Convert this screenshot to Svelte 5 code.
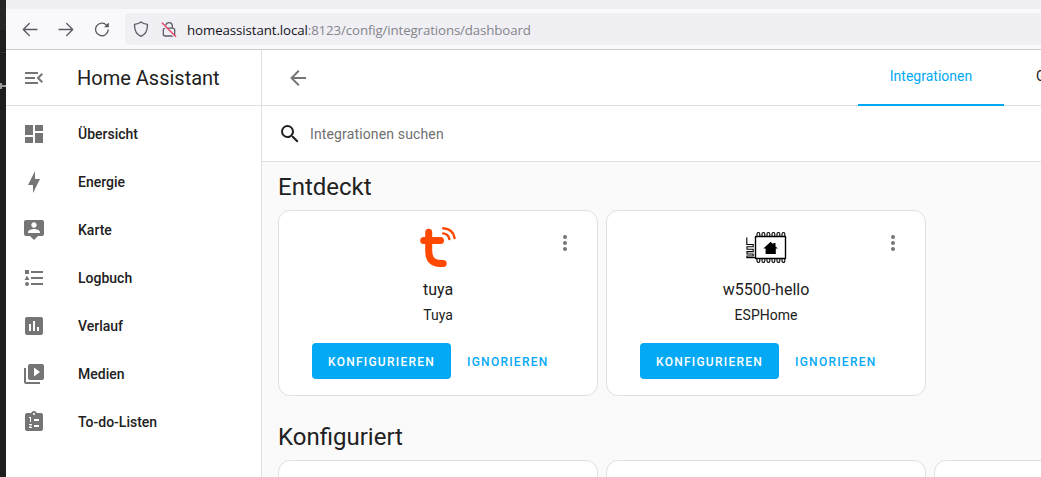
<script>
  const nav = [
    { label: 'Übersicht', path: 'M13,3V9H21V3M13,21H21V11H13M3,21H11V15H3M3,13H11V3H3V13Z' },
    { label: 'Energie', path: 'M11 15H6L13 1V9H18L11 23V15Z' },
    { label: 'Karte', path: 'M20 2H4C2.89 2 2 2.89 2 4V16C2 17.11 2.9 18 4 18H8L12 22L16 18H20C21.11 18 22 17.11 22 16V4C22 2.9 21.11 2 20 2M12 4.3C13.5 4.3 14.7 5.5 14.7 7S13.5 9.7 12 9.7 9.3 8.5 9.3 7 10.5 4.3 12 4.3M18 15H6V14.1C6 12.1 10 11 12 11S18 12.1 18 14.1V15Z' },
    { label: 'Logbuch', path: 'M5,9.5L7.5,14H2.5L5,9.5M3,4H7V8H3V4M5,20A2,2 0 0,0 7,18A2,2 0 0,0 5,16A2,2 0 0,0 3,18A2,2 0 0,0 5,20M9,5V7H21V5H9M9,19H21V17H9V19M9,13H21V11H9V13Z' },
    { label: 'Verlauf', path: 'M19,3H5C3.9,3 3,3.9 3,5V19C3,20.1 3.9,21 5,21H19C20.1,21 21,20.1 21,19V5C21,3.9 20.1,3 19,3M9,17H7V10H9V17M13,17H11V7H13V17M17,17H15V13H17V17Z' },
    { label: 'Medien', path: 'M4,6H2V20A2,2 0 0,0 4,22H18V20H4V6M20,2H8A2,2 0 0,0 6,4V16A2,2 0 0,0 8,18H20A2,2 0 0,0 22,16V4A2,2 0 0,0 20,2M12,14.5V5.5L18,10L12,14.5Z' },
    { label: 'To-do-Listen', path: 'M19 3H14.82C14.4 1.84 13.3 1 12 1S9.6 1.84 9.18 3H5C3.9 3 3 3.9 3 5V19C3 20.1 3.9 21 5 21H19C20.1 21 21 20.1 21 19V5C21 3.9 20.1 3 19 3M12 3C12.55 3 13 3.45 13 4S12.55 5 12 5 11 4.55 11 4 11.45 3 12 3M7 7H9V12H8V8H7V7M10 17V18H7V17.08L9 15H7V14H9.25C9.66 14 10 14.34 10 14.75C10 14.95 9.92 15.14 9.79 15.27L8.12 17H10M12 9H17V11H12V9M12 15H17V17H12V15Z' },
  ];
  const found = [
    { name: 'tuya', domain: 'Tuya', logo: 'tuya' },
    { name: 'w5500-hello', domain: 'ESPHome', logo: 'esp' },
  ];
  const pins = [0, 1, 2, 3, 4, 5];
</script>

<div class="screen">
  <div class="desktop"><i></i></div>
  <div class="browser">
    <div class="tabstrip"></div>
    <div class="toolbar">
      <svg class="nav-ic" viewBox="0 0 16 16"><path d="M15 8.5H1.6M7.3 2.5L1.3 8.5L7.3 14.5" /></svg>
      <svg class="nav-ic" viewBox="0 0 16 16"><path d="M1 8.5H14.4M8.7 2.5L14.7 8.5L8.7 14.5" /></svg>
      <svg class="nav-ic" viewBox="0 0 16 16"><path d="M12.6 4.2A6.3 6.3 0 1 0 14.2 8.9" /><path class="solid" d="M14.9 1.6V6.2H9.9Z" /></svg>
      <div class="url">
        <svg viewBox="0 0 16 16"><path d="M8 .9C6.2 2.4 3.8 3 1.6 3.3C1.3 8.6 3 13.3 8 15.3C13 13.3 14.7 8.6 14.4 3.3C12.2 3 9.8 2.4 8 .9Z" /></svg>
        <svg class="lock" viewBox="0 0 16 16"><path d="M4.9 4A3.3 3.3 0 0 1 11.3 4.3V7M4.3 7.2H11.7Q13.7 7.2 13.7 9.2V13Q13.7 15 11.7 15H4.3Q2.3 15 2.3 13V9.2Q2.3 7.2 4.3 7.2Z" /><path class="halo" d="M1 3.4L14 16.4" /><path class="strike" d="M1.2 2L14.7 15.5" /></svg>
        <span class="address"><b>homeassistant.local</b>:8123/config/integrations/dashboard</span>
      </div>
    </div>
    <div class="app">
      <aside>
        <div class="brand">
          <svg class="mdi" viewBox="0 0 24 24"><path d="M21,15.61L19.59,17L14.58,12L19.59,7L21,8.39L17.44,12L21,15.61M3,6H16V8H3V6M3,13V11H13V13H3M3,18V16H16V18H3Z" /></svg>
          <span>Home Assistant</span>
        </div>
        <nav>
          {#each nav as item}
            <a href="#top"><svg class="mdi" viewBox="0 0 24 24"><path fill-rule="evenodd" d={item.path} /></svg><span>{item.label}</span></a>
          {/each}
        </nav>
      </aside>
      <main>
        <header>
          <svg class="mdi" viewBox="0 0 24 24"><path d="M20,11V13H7.99L13.5,18.5L12.08,19.92L4.16,12L12.08,4.08L13.5,5.5L7.99,11H20Z" /></svg>
          <div class="tabs">
            <div class="tab active">Integrationen</div>
            <div class="tab">Geräte</div>
          </div>
        </header>
        <div class="search">
          <svg class="mdi" viewBox="0 0 24 24"><path d="M9.5,3A6.5,6.5 0 0,1 16,9.5C16,11.11 15.41,12.59 14.44,13.73L14.71,14H15.5L20.5,19L19,20.5L14,15.5V14.71L13.73,14.44C12.59,15.41 11.11,16 9.5,16A6.5,6.5 0 0,1 3,9.5A6.5,6.5 0 0,1 9.5,3M9.5,5C7,5 5,7 5,9.5C5,12 7,14 9.5,14C12,14 14,12 14,9.5C14,7 12,5 9.5,5Z" /></svg>
          <span>Integrationen suchen</span>
        </div>
        <section>
          <h1>Entdeckt</h1>
          <div class="grid">
            {#each found as f}
              <article>
                <svg class="mdi dots" viewBox="0 0 24 24"><circle cx="12" cy="6" r="2" /><circle cx="12" cy="12" r="2" /><circle cx="12" cy="18" r="2" /></svg>
                {#if f.logo === 'tuya'}
                  <svg class="logo" viewBox="0 0 40 40" fill="none" stroke="#ff4800" stroke-linecap="round" stroke-linejoin="round">
                    <path stroke-width="7" d="M10.7 5.2V23.5Q10.7 36.3 22 36.4H25.2M5.7 13.6H22.5" />
                    <path stroke-width="2.4" d="M25.2 6.4Q30.4 7.2 31.3 12M25.2 1.3Q35 2 36.6 11" />
                  </svg>
                {:else}
                  <svg class="logo esp" viewBox="0 0 40 40" fill="none" stroke="#000">
                    <rect x="9.5" y="5.5" width="30" height="22" stroke-width="1.4" rx=".5" />
                    {#each pins as p}
                      <path stroke-width="1.1" d="M{11 + p * 5} 5.2V3Q{11 + p * 5} 1.5 {12.4 + p * 5} 1.5T{13.8 + p * 5} 3V5.2M{11 + p * 5} 28V30Q{11 + p * 5} 31.4 {12.4 + p * 5} 31.4T{13.8 + p * 5} 30V28" />
                    {/each}
                    <path stroke-width="1.1" d="M.8 6.5V13.5H7.2V15.8H1V18.2H7.2V20.6H1V23H7.2V25H.9V26.6H9" />
                    <path fill="#000" stroke="none" d="M24.6 10.8L31.8 17.4H29.8V23H19.6V17.4H17.4ZM27.3 12H29.5V16H27.3Z" />
                  </svg>
                {/if}
                <div class="name">{f.name}</div>
                <div class="domain">{f.domain}</div>
                <div class="actions"><button class="fill">KONFIGURIEREN</button><button>IGNORIEREN</button></div>
              </article>
            {/each}
          </div>
          <h1 class="second">Konfiguriert</h1>
          <div class="grid"><article></article><article></article><article></article></div>
        </section>
      </main>
    </div>
  </div>
</div>

<style>
  :global(body) { margin: 0; overflow: hidden; }
  .screen { display: flex; width: 1041px; height: 477px; overflow: hidden; font-family: Roboto, sans-serif; color: #212121; background: #fff; }
  .desktop { width: 6px; flex: none; background: linear-gradient(#262626 30px, #1e1e1e 30px 52px, #2c2c2c 52px 53px, #1e1e1e 53px); box-sizing: border-box; padding-top: 83px; }
  .desktop i { display: block; height: 6px; background: linear-gradient(#999, #999) 0 0 / 2px 6px no-repeat, linear-gradient(#999, #999) 0 2px / 6px 2px no-repeat; }
  .browser { flex: 1; min-width: 0; display: flex; flex-direction: column; }
  .tabstrip { height: 9px; flex: none; background: #f0f0f4; }
  .toolbar { height: 40px; flex: none; display: flex; align-items: center; background: #f9f9fb; border-bottom: 1px solid #ccc; padding-left: 16px; gap: 20px; }
  .toolbar svg { width: 16px; height: 16px; flex: none; fill: none; stroke: #5b5b66; stroke-width: 1.3; stroke-linecap: round; stroke-linejoin: round; }
  .toolbar .solid { fill: #5b5b66; stroke: none; }
  .toolbar .halo { stroke: #f0f0f4; stroke-width: 1.4; }
  .toolbar .strike { stroke: #e8416a; stroke-width: 1.3; }
  .url { flex: 1; height: 32px; margin-left: -5px; padding-left: 8px; background: #f0f0f4; border-radius: 4px 0 0 4px; display: flex; align-items: center; gap: 12px; white-space: nowrap; overflow: hidden; }
  .address { font: 13.3px/20px "Open Sans", sans-serif; letter-spacing: -0.13px; color: #85858c; margin-left: -2px; padding-top: 2px; }
  .address b { font-weight: 400; color: #15141a; letter-spacing: -0.1px; }
  .app { flex: 1; min-height: 0; display: flex; }
  aside { width: 255px; flex: none; border-right: 1px solid #e0e0e0; }
  .mdi { width: 24px; height: 24px; flex: none; fill: #757575; }
  .brand { height: 55px; border-bottom: 1px solid #e0e0e0; display: flex; align-items: center; padding-left: 16px; gap: 31px; font-size: 20px; }
  nav { padding-top: 4px; }
  nav a { height: 48px; display: flex; align-items: center; padding-left: 16px; gap: 32px; color: #212121; text-decoration: none; font-size: 14px; font-weight: 500; }
  main { flex: 1; min-width: 0; background: #fafafa; }
  header { height: 55px; background: #fff; border-bottom: 1px solid #e0e0e0; display: flex; align-items: center; padding-left: 24px; }
  .tabs { display: flex; align-self: stretch; margin-left: auto; margin-right: -70px; height: 56px; font-size: 14px; }
  .tab { width: 146px; flex: none; box-sizing: border-box; line-height: 53px; text-align: center; }
  .tab + .tab { width: 107px; padding-left: 32px; text-align: left; }
  .tab.active { color: #03a9f4; border-bottom: 2px solid #03a9f4; }
  .search { height: 55px; background: #fff; border-bottom: 1px solid #e0e0e0; display: flex; align-items: center; padding-left: 16px; gap: 8px; font-size: 14px; letter-spacing: 0.14px; color: #6f6f6f; }
  .search .mdi { fill: #212121; }
  section { padding-left: 16px; }
  h1 { margin: 0; padding-top: 8px; height: 40px; font-size: 24px; line-height: 34px; font-weight: 400; }
  h1.second { margin-top: 16px; }
  .grid { display: grid; grid-template-columns: repeat(3, 320px); gap: 8px; }
  article { position: relative; box-sizing: border-box; height: 186px; background: #fff; border: 1px solid #e0e0e0; border-radius: 12px; display: flex; flex-direction: column; align-items: center; padding-top: 16px; }
  .dots { position: absolute; right: 20px; top: 20px; }
  .logo { width: 40px; height: 40px; flex: none; overflow: visible; }
  .esp { position: relative; top: 4px; }
  .name { margin-top: 11px; font-size: 16px; line-height: 24px; }
  .domain { margin-top: 3px; font-size: 14px; line-height: 20px; }
  .actions { display: flex; align-self: flex-start; margin: 18px 0 0 33px; }
  button { font: 500 12px/36px Roboto, sans-serif; letter-spacing: 1.25px; padding: 1px 16px 0; height: 36px; border: 0; border-radius: 4px; background: none; color: #03a9f4; }
  button.fill { background: #03a9f4; color: #fff; font-weight: 500; }
</style>
